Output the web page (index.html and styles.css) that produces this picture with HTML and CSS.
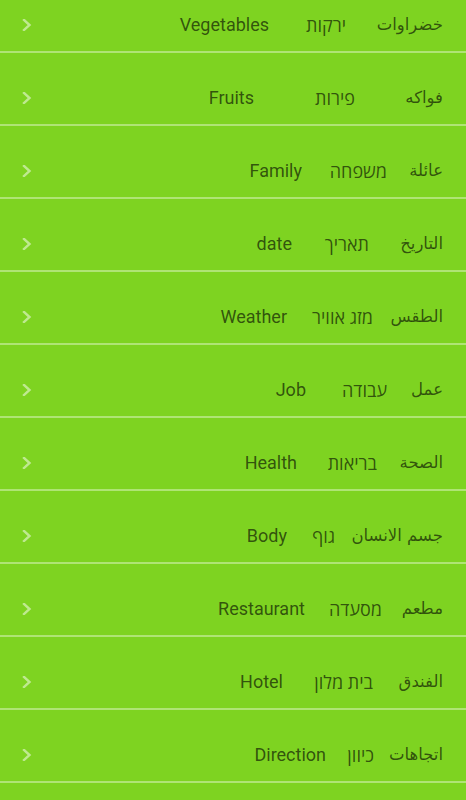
FILE: index.html
```html
<!DOCTYPE html>
<html lang="en">
<head>
<meta charset="utf-8">
<title>Categories</title>
<link rel="stylesheet" href="styles.css">
</head>
<body>
<ul class="list">
  <li class="row" style="--a:97px;--h:77px"><svg class="chev" viewBox="0 0 10 12"><polyline points="2,1 7.5,6 2,11"/></svg><span class="en">Vegetables</span><span class="he" dir="rtl">ירקות</span><span class="ar" dir="rtl">خضراوات</span></li>
  <li class="row" style="--a:88px;--h:101px"><svg class="chev" viewBox="0 0 10 12"><polyline points="2,1 7.5,6 2,11"/></svg><span class="en">Fruits</span><span class="he" dir="rtl">פירות</span><span class="ar" dir="rtl">فواكه</span></li>
  <li class="row" style="--a:56px;--h:85px"><svg class="chev" viewBox="0 0 10 12"><polyline points="2,1 7.5,6 2,11"/></svg><span class="en">Family</span><span class="he" dir="rtl">משפחה</span><span class="ar" dir="rtl">عائلة</span></li>
  <li class="row" style="--a:74px;--h:77px"><svg class="chev" viewBox="0 0 10 12"><polyline points="2,1 7.5,6 2,11"/></svg><span class="en">date</span><span class="he" dir="rtl">תאריך</span><span class="ar" dir="rtl">التاريخ</span></li>
  <li class="row" style="--a:70px;--h:86px"><svg class="chev" viewBox="0 0 10 12"><polyline points="2,1 7.5,6 2,11"/></svg><span class="en">Weather</span><span class="he" dir="rtl">מזג אוויר</span><span class="ar" dir="rtl">الطقس</span></li>
  <li class="row" style="--a:56px;--h:81px"><svg class="chev" viewBox="0 0 10 12"><polyline points="2,1 7.5,6 2,11"/></svg><span class="en">Job</span><span class="he" dir="rtl">עבודה</span><span class="ar" dir="rtl">عمل</span></li>
  <li class="row" style="--a:66px;--h:80px"><svg class="chev" viewBox="0 0 10 12"><polyline points="2,1 7.5,6 2,11"/></svg><span class="en">Health</span><span class="he" dir="rtl">בריאות</span><span class="ar" dir="rtl">الصحة</span></li>
  <li class="row" style="--a:108px;--h:48px"><svg class="chev" viewBox="0 0 10 12"><polyline points="2,1 7.5,6 2,11"/></svg><span class="en">Body</span><span class="he" dir="rtl">גוף</span><span class="ar" dir="rtl">جسم الانسان</span></li>
  <li class="row" style="--a:61px;--h:77px"><svg class="chev" viewBox="0 0 10 12"><polyline points="2,1 7.5,6 2,11"/></svg><span class="en">Restaurant</span><span class="he" dir="rtl">מסעדה</span><span class="ar" dir="rtl">مطعم</span></li>
  <li class="row" style="--a:70px;--h:90px"><svg class="chev" viewBox="0 0 10 12"><polyline points="2,1 7.5,6 2,11"/></svg><span class="en">Hotel</span><span class="he" dir="rtl">בית מלון</span><span class="ar" dir="rtl">الفندق</span></li>
  <li class="row" style="--a:69px;--h:48px"><svg class="chev" viewBox="0 0 10 12"><polyline points="2,1 7.5,6 2,11"/></svg><span class="en">Direction</span><span class="he" dir="rtl">כיוון</span><span class="ar" dir="rtl">اتجاهات</span></li>
</ul>
</body>
</html>
```
FILE: styles.css
```css
html, body {
  margin: 0;
  padding: 0;
  background: #7ed321;
}
body {
  font-family: Roboto, "DejaVu Sans", sans-serif;
  font-size: 18px;
  color: rgba(0, 0, 0, 0.62);
  overflow: hidden;
  height: 800px;
}
.list {
  list-style: none;
  margin: -20px 0 0 0;
  padding: 0;
}
.row {
  display: flex;
  align-items: center;
  height: 71px;
  box-sizing: content-box;
  padding: 0 23px 0 22px;
  border-bottom: 2px solid rgba(255, 255, 255, 0.38);
}
.row > span {
  line-height: 24px;
  position: relative;
  top: 9px;
  white-space: nowrap;
}
.chev {
  width: 10px;
  height: 12px;
  flex: none;
  position: relative;
  top: 9px;
  fill: none;
  stroke: rgba(255, 255, 255, 0.5);
  stroke-width: 2.4;
  stroke-linecap: square;
}
.en {
  margin-left: auto;
}
.he {
  width: var(--h);
  flex: none;
  text-align: right;
  font-family: "Open Sans", "DejaVu Sans", sans-serif;
}
.ar {
  width: var(--a);
  flex: none;
  text-align: right;
  font-family: "DejaVu Sans", sans-serif;
  font-size: 16.5px;
}
```
